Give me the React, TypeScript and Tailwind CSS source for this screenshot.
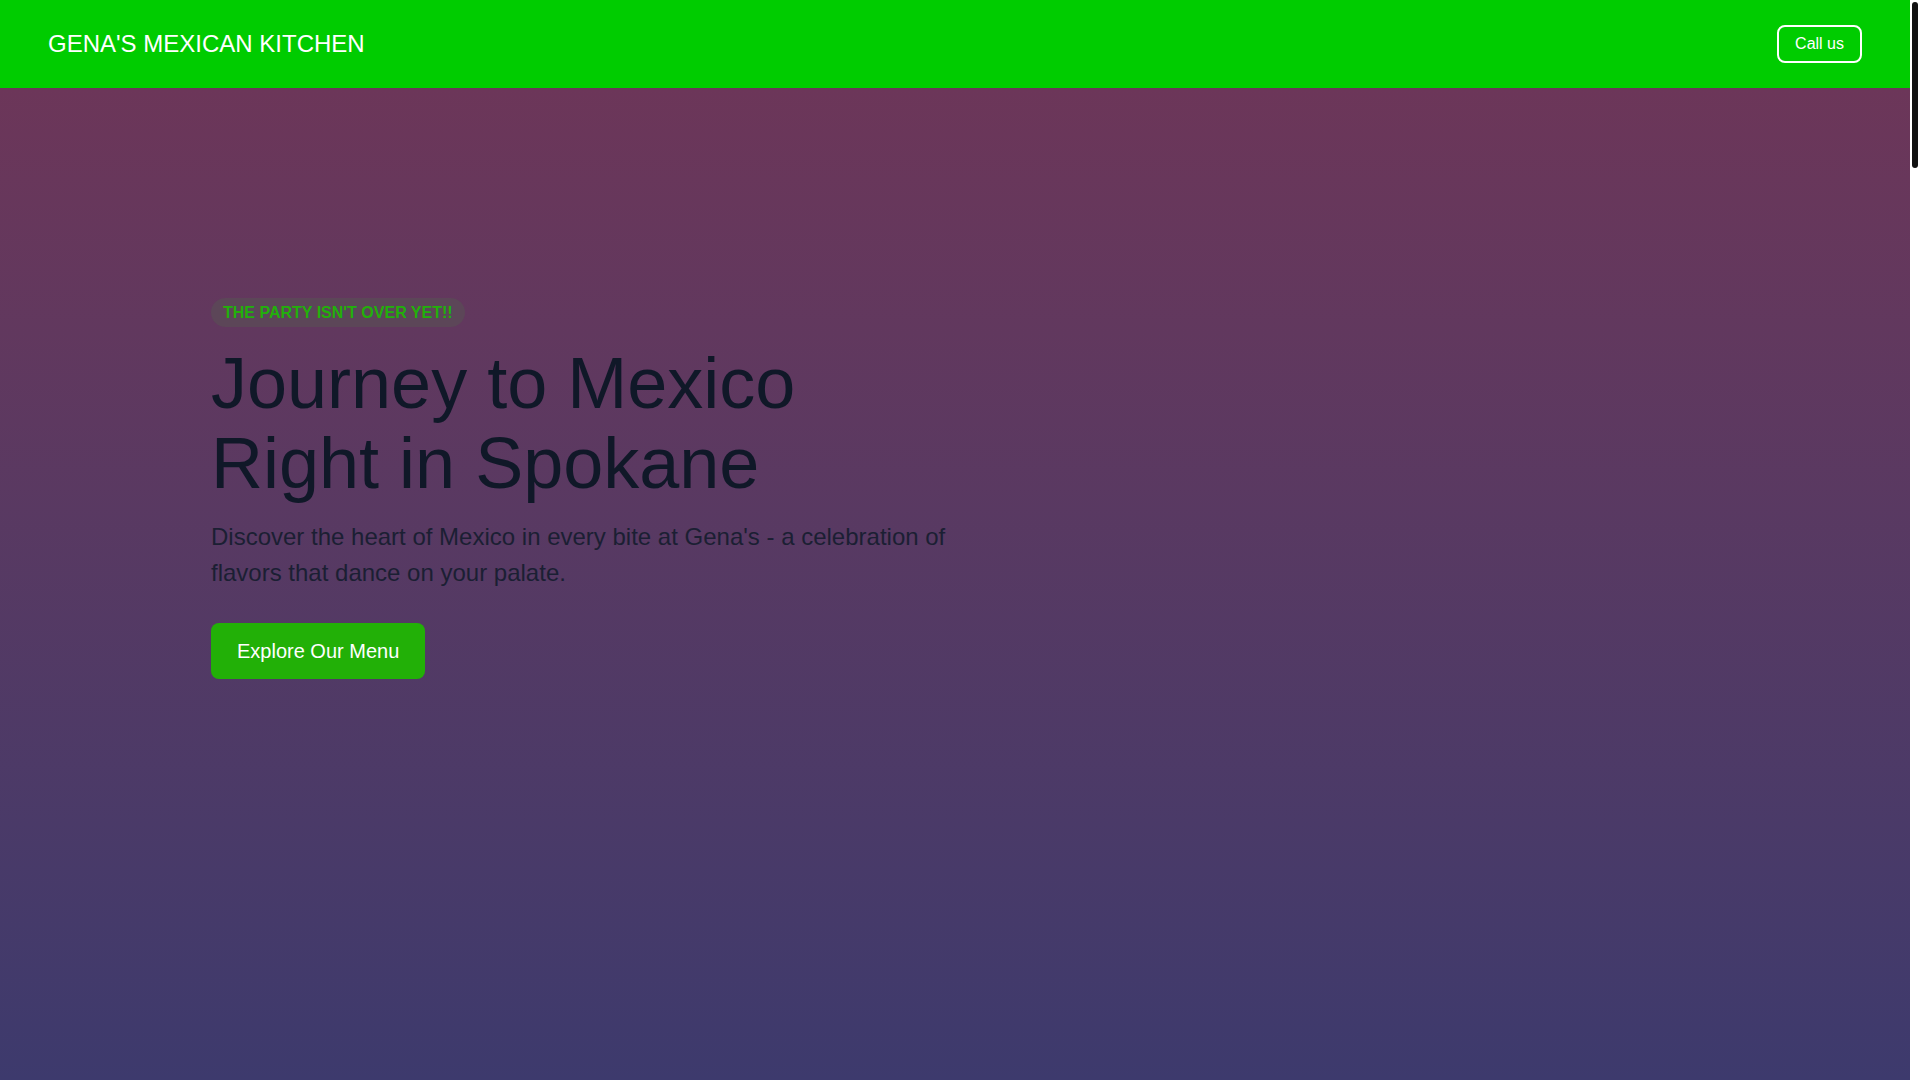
export default function App() {
  return (
    <div className="flex h-screen overflow-hidden font-['Liberation_Sans',Arial,sans-serif]">
      <main className="min-w-0 flex-1">
        <header className="flex h-[88px] items-center justify-between bg-[#00cc00] px-12">
          <a href="#" className="text-2xl text-white">
            GENA'S MEXICAN KITCHEN
          </a>
          <a
            href="#"
            className="rounded-lg border-2 border-white px-4 py-[5px] text-base leading-6 text-white"
          >
            Call us
          </a>
        </header>

        <section className="h-[992px] bg-linear-to-b from-[#6c3659] to-[#3d3a6d]">
          <div className="mx-auto max-w-[1536px] px-6 pt-[210px]">
            <div className="w-[744px]">
              <span className="inline-flex h-[29px] items-center rounded-full bg-[#5c4658] px-3 text-base font-bold uppercase text-[#22b00a]">
                The party isn't over yet!!
              </span>
              <h1 className="mt-[16px] text-7xl leading-[80px] text-gray-900">
                Journey to Mexico Right in Spokane
              </h1>
              <p className="mt-4 text-2xl leading-9 text-[#1b1f33]">
                Discover the heart of Mexico in every bite at Gena's - a
                celebration of flavors that dance on your palate.
              </p>
              <button className="mt-8 rounded-lg bg-[#22b007] px-[26px] py-3.5 text-xl leading-7 text-white">
                Explore Our Menu
              </button>
            </div>
          </div>
        </section>
      </main>

      {/* page scrollbar */}
      <aside className="w-[10px] shrink-0 bg-white pt-[2px]">
        <div className="mx-auto h-[166px] w-[6px] rounded-full bg-[#111111]" />
      </aside>
    </div>
  );
}
